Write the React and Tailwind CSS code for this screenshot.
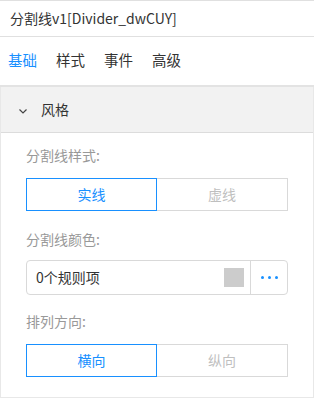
import React from "react";

const font = { fontFamily: '"Noto Sans CJK SC", "Noto Sans", sans-serif' };

function Segmented({ a, b }) {
  return (
    <div className="flex h-[33px] w-[262px]">
      <div className="flex w-[131px] items-center justify-center border border-[#1890ff] text-[14px] text-[#1890ff]">
        {a}
      </div>
      <div className="flex w-[131px] items-center justify-center border border-l-0 border-[#d9d9d9] text-[14px] text-[#bfbfbf]">
        {b}
      </div>
    </div>
  );
}

export default function App() {
  return (
    <div className="w-[314px] h-[398px] bg-white" style={font}>
      <div className="flex h-[37px] items-center border-t border-b border-[#e0e0e0] pl-[10px] text-[14px] text-[#333]">
        分割线v1[Divider_dwCUY]
      </div>
      <div className="flex h-[50px] items-center gap-[19px] border-b-2 border-[#e3e3e3] pl-[8px] pb-[2px] text-[14.5px] text-[#333]">
        <span className="text-[#1890ff]">基础</span>
        <span>样式</span>
        <span>事件</span>
        <span>高级</span>
      </div>
      <div className="border-x border-b border-[#e8e8e8] h-[311px]">
        <div className="flex h-[46px] items-center border-b border-[#dcdcdc] bg-[#f2f2f2] pl-[17px] text-[14px] text-[#333]">
          <svg width="10" height="10" viewBox="0 0 10 10" className="mr-[13px] mt-[2px]">
            <path d="M1.5 3.5 L5 7 L8.5 3.5" fill="none" stroke="#444" strokeWidth="1.2" />
          </svg>
          <span>风格</span>
        </div>
        <div className="pl-[25px]">
          <div className="mt-[12px] h-[20px] text-[14px] leading-[20px] text-[#999]">分割线样式:</div>
          <div className="mt-[13px]">
            <Segmented a="实线" b="虚线" />
          </div>
          <div className="mt-[18px] h-[20px] text-[14px] leading-[20px] text-[#999]">分割线颜色:</div>
          <div className="mt-[11px] flex h-[35px] w-[262px] items-center rounded-[4px] border border-[#d9d9d9]">
            <span className="flex-1 pl-[9px] text-[14px] text-[#333]">0个规则项</span>
            <div className="mr-[6px] h-[19px] w-[20px] bg-[#cccccc]" />
            <div className="flex h-full w-[37px] items-center justify-center gap-[4px] border-l border-[#d9d9d9]">
              <span className="h-[3px] w-[3px] rounded-full bg-[#1890ff]" />
              <span className="h-[3px] w-[3px] rounded-full bg-[#1890ff]" />
              <span className="h-[3px] w-[3px] rounded-full bg-[#1890ff]" />
            </div>
          </div>
          <div className="mt-[16px] h-[20px] text-[14px] leading-[20px] text-[#999]">排列方向:</div>
          <div className="mt-[13px]">
            <Segmented a="横向" b="纵向" />
          </div>
        </div>
      </div>
    </div>
  );
}
